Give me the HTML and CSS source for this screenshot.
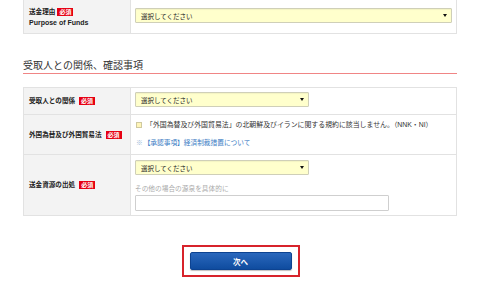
FILE: index.html
```html
<!DOCTYPE html>
<html lang="ja">
<head>
<meta charset="utf-8">
<title>送金フォーム</title>
<link rel="stylesheet" href="styles.css">
</head>
<body>
<div class="page">
  <div class="form form-top">
    <div class="label two-line">
      <div class="label-line">送金理由<span class="req">必須</span></div>
      <div class="label-en">Purpose of Funds</div>
    </div>
    <div class="value v-purpose">
      <div class="select full"><span>選択してください</span><i class="arrow"></i></div>
    </div>
  </div>

  <h2 class="section-title">受取人との関係、確認事項</h2>

  <div class="form">
    <div class="label r1"><span>受取人との関係</span><span class="req">必須</span></div>
    <div class="value r1 v-rel">
      <div class="select mid"><span>選択してください</span><i class="arrow"></i></div>
    </div>

    <div class="label r2"><span>外国為替及び外国貿易法</span><span class="req">必須</span></div>
    <div class="value r2 v-check">
      <div class="check-line"><span class="checkbox"></span><span>「外国為替及び外国貿易法」の北朝鮮及びイランに関する規約に該当しません。（NNK・NI）</span></div>
      <div class="link-line"><span class="mark">※</span><a class="link" href="#">【承認事項】経済制裁措置について</a></div>
    </div>

    <div class="label r3"><span>送金資源の出処</span><span class="req">必須</span></div>
    <div class="value r3 v-source">
      <div class="select mid"><span>選択してください</span><i class="arrow"></i></div>
      <div class="hint">その他の場合の源泉を具体的に</div>
      <div class="text-input"></div>
    </div>
  </div>

  <div class="actions">
    <div class="btn-frame"><button class="btn" type="button">次へ</button></div>
  </div>
</div>
</body>
</html>
```

FILE: styles.css
```css
* { box-sizing: border-box; }
html, body { margin: 0; padding: 0; background: #fff; }
body {
  font-family: "Liberation Sans", "Noto Sans CJK JP", sans-serif;
  color: #333;
  font-size: 6.7px;
}
.page {
  width: 434px;
  margin-left: 23px;
}
.form {
  display: grid;
  grid-template-columns: 107px 1fr;
  border: 1px solid #e2e2e2;
  border-bottom: none;
}
.form-top {
  margin-top: -1px;
}
.label {
  background: #f3f3f3;
  border-right: 1px solid #e2e2e2;
  border-bottom: 1px solid #e2e2e2;
  font-weight: bold;
  padding-left: 5px;
  display: flex;
  align-items: center;
  gap: 2px;
  font-size: 6.6px;
  line-height: 10px;
  color: #222;
}
.label.two-line {
  flex-direction: column;
  align-items: flex-start;
  justify-content: center;
  gap: 0;
  height: 34px;
  padding-top: 1px;
}
.label-line { display: flex; align-items: center; gap: 2px; }
.label-en {
  font-family: "Liberation Sans", sans-serif;
  font-size: 7px;
  line-height: 11px;
}
.req {
  display: inline-block;
  background: #e60012;
  color: #fff;
  font-size: 6px;
  line-height: 8px;
  height: 8px;
  padding: 0 2px;
  font-weight: bold;
  margin-left: 2px;
}
.label-line .req { margin-left: 0; }
.value {
  border-bottom: 1px solid #e2e2e2;
  padding-left: 4px;
  padding-right: 4px;
}
.v-purpose { padding-top: 8px; height: 34px; }
.v-rel { padding-top: 4px; height: 27px; }
.v-check { padding-top: 5px; height: 40px; }
.v-source { padding-top: 5px; height: 61px; }

.select {
  height: 15px;
  background: #ffffcc;
  border: 1px solid #cfcfb8;
  box-shadow: inset 0 1px 1px rgba(0,0,0,0.05);
  border-radius: 1px;
  display: flex;
  align-items: center;
  justify-content: space-between;
  padding: 0 4px 0 5px;
  font-size: 6.5px;
  color: #222;
}
.select.full { width: 100%; }
.select.mid { width: 174px; }
.arrow {
  width: 0; height: 0;
  border-left: 2px solid transparent;
  border-right: 2px solid transparent;
  border-top: 3px solid #111;
}
.check-line {
  display: flex;
  align-items: center;
  gap: 4px;
  line-height: 10px;
  padding-left: 1px;
  font-size: 6.9px;
}
.checkbox {
  width: 6px; height: 6px;
  border: 1px solid #cfc9a0;
  background: #fff5b8;
  flex: none;
}
.link-line {
  margin-top: 8px;
  line-height: 10px;
  padding-left: 1px;
}
.mark { color: #9bb7d6; margin-right: 1px; }
.link { color: #3a7cc4; text-decoration: none; }
.hint {
  color: #aaa;
  line-height: 10px;
  margin-top: 9px;
}
.text-input {
  margin-top: 1px;
  width: 254px;
  height: 16px;
  border: 1px solid #cfcfcf;
  background: #fff;
  border-radius: 1px;
}
.section-title {
  margin: 25px 0 13px 0;
  font-family: "Noto Sans CJK JP", sans-serif;
  font-weight: normal;
  font-size: 10px;
  line-height: 12px;
  padding-bottom: 2px;
  border-bottom: 1px solid #f08585;
  color: #333;
}
.actions {
  display: flex;
  justify-content: center;
  margin-top: 29px;
  padding-left: 1px;
}
.btn-frame {
  border: 2px solid #d7232b;
  padding: 5px 6px;
  width: 118px;
  height: 32px;
}
.btn {
  display: block;
  width: 102px;
  height: 18px;
  border: 1px solid #0d4391;
  border-radius: 2px;
  background: linear-gradient(#2a68bd, #0f4c9f);
  color: #fff;
  font-family: "Noto Sans CJK JP", sans-serif;
  font-weight: bold;
  font-size: 7.5px;
  padding: 0;
  box-shadow: 0 1px 1px rgba(0,0,0,0.25);
}
```
